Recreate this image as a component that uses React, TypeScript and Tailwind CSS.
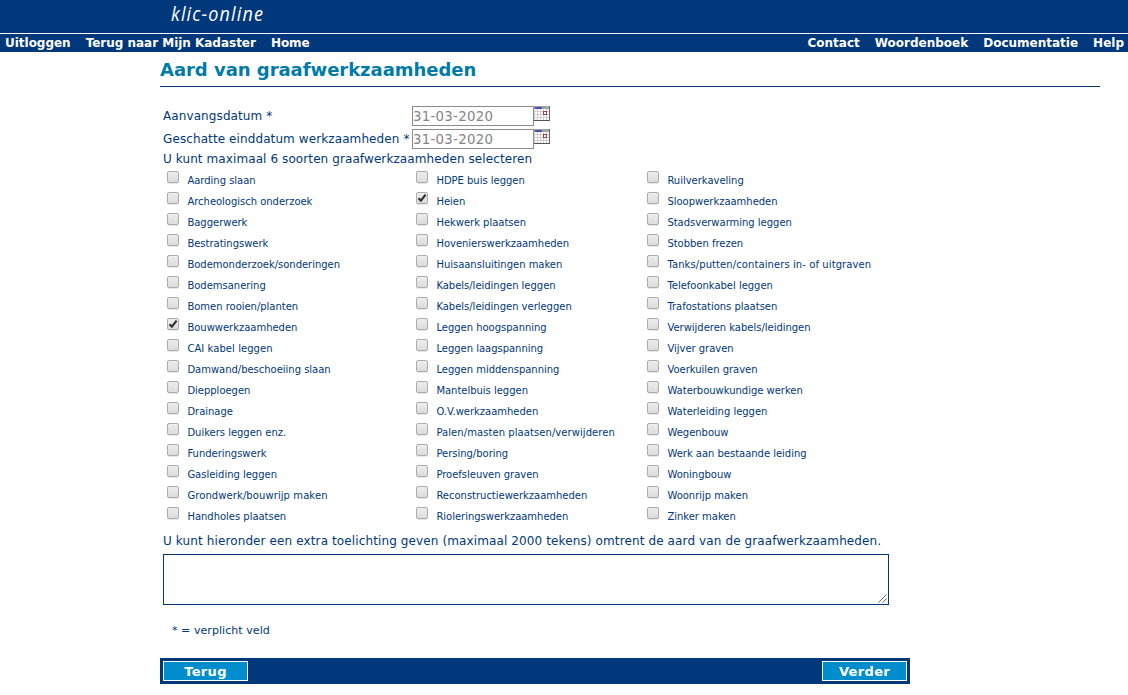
import React from "react";

const columns: { width: string; items: string[] }[] = [
  {
    width: "w-[249px]",
    items: [
      "Aarding slaan", "Archeologisch onderzoek", "Baggerwerk", "Bestratingswerk", "Bodemonderzoek/sonderingen",
      "Bodemsanering", "Bomen rooien/planten", "Bouwwerkzaamheden", "CAI kabel leggen", "Damwand/beschoeiing slaan",
      "Diepploegen", "Drainage", "Duikers leggen enz.", "Funderingswerk", "Gasleiding leggen",
      "Grondwerk/bouwrijp maken", "Handholes plaatsen",
    ],
  },
  {
    width: "w-[231px]",
    items: [
      "HDPE buis leggen", "Heien", "Hekwerk plaatsen", "Hovenierswerkzaamheden", "Huisaansluitingen maken",
      "Kabels/leidingen leggen", "Kabels/leidingen verleggen", "Leggen hoogspanning", "Leggen laagspanning",
      "Leggen middenspanning", "Mantelbuis leggen", "O.V.werkzaamheden", "Palen/masten plaatsen/verwijderen",
      "Persing/boring", "Proefsleuven graven", "Reconstructiewerkzaamheden", "Rioleringswerkzaamheden",
    ],
  },
  {
    width: "w-[260px]",
    items: [
      "Ruilverkaveling", "Sloopwerkzaamheden", "Stadsverwarming leggen", "Stobben frezen",
      "Tanks/putten/containers in- of uitgraven", "Telefoonkabel leggen", "Trafostations plaatsen",
      "Verwijderen kabels/leidingen", "Vijver graven", "Voerkuilen graven", "Waterbouwkundige werken",
      "Waterleiding leggen", "Wegenbouw", "Werk aan bestaande leiding", "Woningbouw", "Woonrijp maken", "Zinker maken",
    ],
  },
];

const selected = new Set(["Bouwwerkzaamheden", "Heien"]);

const itemTracking: Record<string, string> = {
  "Tanks/putten/containers in- of uitgraven": "tracking-[0.09px]",
  "Palen/masten plaatsen/verwijderen": "tracking-[0.07px]",
  "Grondwerk/bouwrijp maken": "tracking-[0.09px]",
  "CAI kabel leggen": "tracking-[0.06px]",
};

function CalendarIcon() {
  return (
    <svg width="16" height="15" viewBox="0 0 16 15" shapeRendering="crispEdges" className="shrink-0">
      <rect width="16" height="15" fill="#d0ced2" />
      <rect width="16" height="3" fill="#a3a3a3" />
      <rect x="1" y="1" width="7" height="2" fill="#4850ac" />
      {[3, 6, 9, 12].map((y) =>
        [1, 4, 7, 10, 13].map((x) => <rect key={`${x}-${y}`} x={x} y={y} width="2" height="2" fill="#fff" />),
      )}
      <rect x="9" y="5" width="4" height="4" fill="#a04040" />
      <rect x="10" y="6" width="2" height="2" fill="#fff" />
      <rect x="15" width="1" height="15" fill="#666" />
      <rect y="14" width="16" height="1" fill="#555" />
    </svg>
  );
}

function Checkbox({ checked }: { checked: boolean }) {
  return (
    <span
      role="checkbox"
      aria-checked={checked}
      className="block size-3 shrink-0 rounded-[2px] border border-[#acacac] bg-linear-to-b from-[#ededed] to-[#dcdcdc] shadow-[0_1px_0_#e8e8e8]"
    >
      {checked && (
        <svg width="10" height="10" viewBox="0 0 10 10" className="block">
          <path d="M1.5 5.2 3.9 7.6 8.6 1.6" fill="none" stroke="#333" strokeWidth="2.3" />
        </svg>
      )}
    </span>
  );
}

function DateRow({ label }: { label: string }) {
  return (
    <div className="flex h-[23px] items-start">
      <label className="w-[249px] pt-[2px] leading-4 tracking-[0.1px] whitespace-nowrap">{label}</label>
      <div className="flex h-5 w-[122px] items-center border border-[#8c8c8c] pt-px text-[13.33px] leading-4 tracking-[0.27px] text-[#858585]">
        31-03-2020
      </div>
      <CalendarIcon />
    </div>
  );
}

export default function App() {
  return (
    <div className="h-[695px] w-[1128px] overflow-hidden bg-white font-['DejaVu_Sans',sans-serif] text-[12px] text-[#00387b]">
      <header className="bg-[#00387b] text-white">
        <div className="h-[33px] pl-[171px]">
          <div className="w-max origin-left scale-x-[0.9] font-['Open_Sans',sans-serif] text-[20px] leading-[28px] tracking-[1.25px] italic">
            klic-online
          </div>
        </div>
        <nav className="flex h-[19px] justify-between border-t border-white pr-1 pl-[5px] leading-[18px] font-bold">
          <div className="flex gap-[15px] tracking-[-0.02px]">
            <span>Uitloggen</span>
            <span>Terug naar Mijn Kadaster</span>
            <span>Home</span>
          </div>
          <div className="flex gap-[15px]">
            <span>Contact</span>
            <span>Woordenboek</span>
            <span>Documentatie</span>
            <span>Help</span>
          </div>
        </nav>
      </header>

      <main className="ml-40">
        <h1 className="h-[35px] w-[940px] border-b border-[#00387b] pt-[6px] text-[18px] leading-6 font-bold tracking-[-0.03px] text-[#007ba9]">
          Aard van graafwerkzaamheden
        </h1>

        <div className="pt-[19px] pl-[3px]">
          <DateRow label="Aanvangsdatum *" />
          <DateRow label="Geschatte einddatum werkzaamheden *" />
          <p className="h-[17px] leading-[14px] tracking-[0.095px]">U kunt maximaal 6 soorten graafwerkzaamheden selecteren</p>
          <div className="flex pl-1">
            {columns.map((column) => (
              <ul key={column.items[0]} className={column.width}>
                {column.items.map((item) => (
                  <li key={item} className="flex h-[21px] gap-2 pt-[2px] text-[10px] whitespace-nowrap">
                    <Checkbox checked={selected.has(item)} />
                    <span className={`pt-[4px] pl-[0.4px] leading-3 ${itemTracking[item] ?? "tracking-[-0.02px]"}`}>
                      {item}
                    </span>
                  </li>
                ))}
              </ul>
            ))}
          </div>
          <p className="pt-[7px] leading-4 tracking-[0.118px]">
            U kunt hieronder een extra toelichting geven (maximaal 2000 tekens) omtrent de aard van de graafwerkzaamheden.
          </p>
          <div className="mt-[5px] flex h-[51px] w-[726px] items-end justify-end border border-[#00387b] p-px">
            <svg width="9" height="9" viewBox="0 0 9 9">
              <path d="M.5 8.5 8.5.5M4.5 8.5 8.5 4.5" stroke="#666" fill="none" />
            </svg>
          </div>
          <p className="mt-[18px] pl-[9px] text-[11px] leading-4 tracking-[0.06px]">* = verplicht veld</p>
        </div>

        <div className="mt-[19px] flex h-[26px] w-[750px] items-center justify-between bg-[#00387b] px-[3px] text-[13px] font-bold tracking-[0.35px] text-white">
          <button className="h-5 w-[85px] border border-white bg-[#008dce] leading-[19px]">Terug</button>
          <button className="h-5 w-[85px] border border-white bg-[#008dce] leading-[19px]">Verder</button>
        </div>
      </main>
    </div>
  );
}
